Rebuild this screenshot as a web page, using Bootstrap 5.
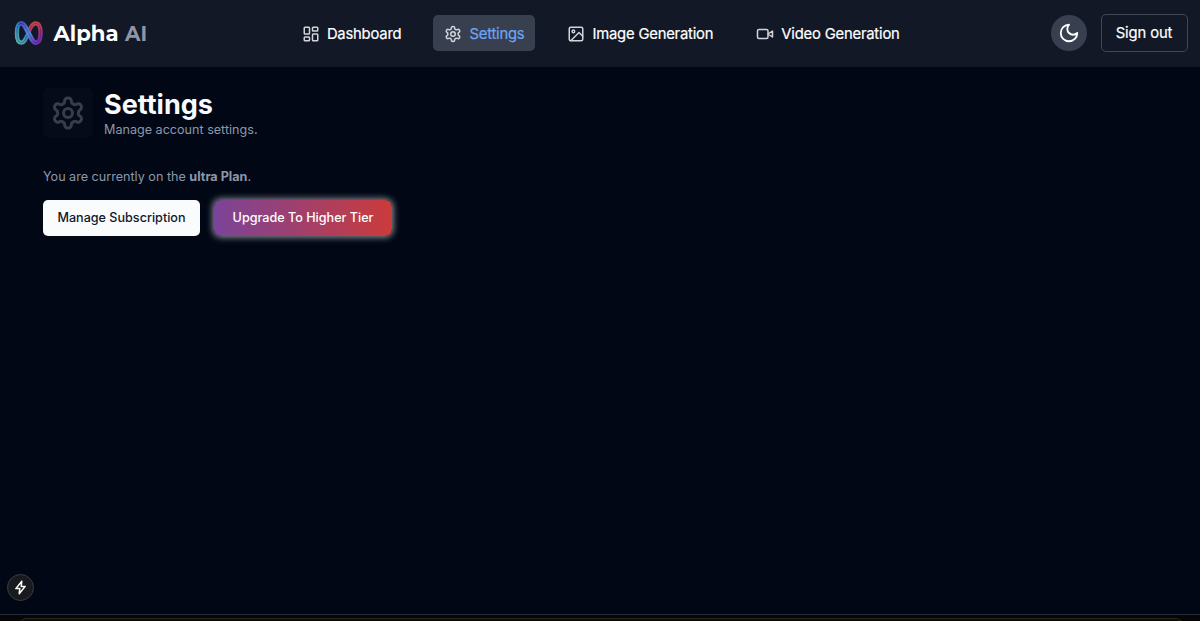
<!DOCTYPE html>
<html lang="en">
<head>
<meta charset="utf-8">
<meta name="viewport" content="width=device-width, initial-scale=1">
<title>Settings - Alpha AI</title>
<link href="https://cdn.jsdelivr.net/npm/bootstrap@5.3.0/dist/css/bootstrap.min.css" rel="stylesheet">
<style>
body{font-family:Inter,"Liberation Sans",sans-serif;background:#010715;color:#f8fafc;height:621px;overflow:hidden;font-size:12.6px}
svg{display:block;flex:none}
.ico{fill:none;stroke:currentColor;stroke-width:2;stroke-linecap:round;stroke-linejoin:round}
.topbar{height:67px;background:#121826;padding:0 12.5px 1px 14px;display:grid;grid-template-columns:1fr auto 1fr;align-items:center}
.word{font-family:Montserrat,Lato,sans-serif;font-size:21.8px;font-weight:700}
.menu{gap:21px;margin-left:0}
.menu .nav-link{color:#fff;font-size:14.8px;font-weight:400;letter-spacing:-.2px;height:36px;padding:1px 11px 0;gap:7px;border-radius:5px;line-height:20px;white-space:nowrap;-webkit-text-stroke:.2px currentColor}
.menu .nav-link svg{color:#d1d5db}
.menu .nav-link.active{background:#384050;color:#6fa5f5}
.mode{width:36px;height:36px;background:#384050;border-radius:50%;border:0;color:#fff;padding:0;margin-right:14px}
.signout{width:87px;height:38px;border:1px solid #404756;border-radius:5px;color:#fff;font-size:14.8px;font-weight:400;letter-spacing:-.1px;-webkit-text-stroke:.2px currentColor;padding:0;white-space:nowrap}
.signout:hover{border-color:#6b7280;color:#fff}
main{padding:21px 43px 0;height:547px}
.tile{width:50px;height:50px;border-radius:5px;background:#050b18;color:#373d4a;margin-right:11px}
h1{font-size:27px;font-weight:700;line-height:32px;margin:1px 0 0}
.soft{color:#8c97aa;line-height:18px;font-size:12.6px}
.plan{margin:29px 0 14px}
.actions{gap:14px}
.act{height:36px;border:0;border-radius:5px;font-size:12.6px;font-weight:500;padding:0;white-space:nowrap}
.manage{width:157px;background:#fafbfd;color:#0f172a}
.upgrade{width:178px;color:#fff;background:linear-gradient(to right,#7a4499,#cb3b3b);box-shadow:0 0 7px 1px rgba(255,255,255,.6);border-radius:7px}
.bolt{left:7px;top:574px;width:27px;height:27px;border-radius:50%;background:#191a1d;border:1px solid #3b3c3f;color:#fff}
.edge{height:7px;background:#060606;border-top:1px solid #272c39;padding:3px 18px 0 20px}
.edge div{height:6px;background:#0d0c0b;border:1px solid #292722;border-radius:9px 9px 0 0}
</style>
</head>
<body>
<header class="topbar">
  <div class="d-flex align-items-center">
    <svg width="29" height="28" viewBox="-.5 0 30 28" fill="none" stroke-linecap="round">
      <defs>
        <linearGradient id="l1" x1="1" y1="22" x2="20" y2="5" gradientUnits="userSpaceOnUse"><stop stop-color="#55b4ad"/><stop offset=".45" stop-color="#3585c5"/><stop offset="1" stop-color="#4648b8"/></linearGradient>
        <linearGradient id="l2" x1="18" y1="3" x2="23" y2="26" gradientUnits="userSpaceOnUse"><stop stop-color="#c74c3d"/><stop offset=".5" stop-color="#a32c86"/><stop offset="1" stop-color="#682cbc"/></linearGradient>
        <linearGradient id="l3" x1="7" y1="4" x2="22" y2="24" gradientUnits="userSpaceOnUse"><stop stop-color="#454bc0"/><stop offset=".5" stop-color="#568de0"/><stop offset="1" stop-color="#6b34be"/></linearGradient>
      </defs>
      <path d="M15 12C17 7 19 4 22 4c3.500 0 5 4 5 10s-1.500 10-5 10" stroke="url(#l2)" stroke-width="4.500"/>
      <path d="M13 17c-2 4-3 7-6 7-3.500 0-4.500-4-4.500-10S3.500 4 7 4" stroke="url(#l1)" stroke-width="4.500"/>
      <path d="M7 4c5 0 10 20 15 20" stroke="url(#l3)" stroke-width="5"/>
      <path d="M13 17c-2 4-3 7-6 7-3.500 0-4.500-4-4.500-10S3.500 4 7 4c5 0 10 20 15 20 3.500 0 5-4 5-10S25.500 4 22 4c-3 0-5 3-7 8" stroke="#121826" stroke-opacity=".4" stroke-width=".8"/>
    </svg>
    <svg width="105" height="34" viewBox="0 0 105 34" role="img" aria-label="Alpha AI"><text class="word" x="10.5" y="25" fill="#fff" textLength="65" lengthAdjust="spacingAndGlyphs">Alpha</text><text class="word" x="82" y="25" fill="#8f95a3" textLength="22" lengthAdjust="spacingAndGlyphs">AI</text></svg>
  </div>
  <nav class="nav menu flex-nowrap">
    <a class="nav-link d-flex align-items-center" href="#"><svg class="ico" width="18" height="18" viewBox="0 0 24 24"><rect x="3" y="3" width="7" height="9" rx="1"/><rect x="14" y="3" width="7" height="5" rx="1"/><rect x="14" y="12" width="7" height="9" rx="1"/><rect x="3" y="16" width="7" height="5" rx="1"/></svg>Dashboard</a>
    <a class="nav-link active d-flex align-items-center" href="#"><svg class="ico" width="18" height="18" viewBox="0 0 24 24"><path id="gear" d="M12.22 2h-.44a2 2 0 0 0-2 2v.18a2 2 0 0 1-1 1.73l-.43.25a2 2 0 0 1-2 0l-.15-.08a2 2 0 0 0-2.73.73l-.22.38a2 2 0 0 0 .73 2.73l.15.1a2 2 0 0 1 1 1.72v.51a2 2 0 0 1-1 1.74l-.15.09a2 2 0 0 0-.73 2.73l.22.38a2 2 0 0 0 2.73.73l.15-.08a2 2 0 0 1 2 0l.43.25a2 2 0 0 1 1 1.73V20a2 2 0 0 0 2 2h.44a2 2 0 0 0 2-2v-.18a2 2 0 0 1 1-1.73l.43-.25a2 2 0 0 1 2 0l.15.08a2 2 0 0 0 2.73-.73l.22-.39a2 2 0 0 0-.73-2.73l-.15-.08a2 2 0 0 1-1-1.74v-.5a2 2 0 0 1 1-1.74l.15-.09a2 2 0 0 0 .73-2.73l-.22-.38a2 2 0 0 0-2.73-.73l-.15.08a2 2 0 0 1-2 0l-.43-.25a2 2 0 0 1-1-1.73V4a2 2 0 0 0-2-2z"/><circle cx="12" cy="12" r="3"/></svg>Settings</a>
    <a class="nav-link d-flex align-items-center" href="#"><svg class="ico" width="18" height="18" viewBox="0 0 24 24"><rect x="3" y="3" width="18" height="18" rx="2"/><circle cx="8.5" cy="8.5" r="1.7"/><path d="m21 15-5-5L5 21"/></svg>Image Generation</a>
    <a class="nav-link d-flex align-items-center" href="#"><svg class="ico" width="18" height="18" viewBox="0 0 24 24"><path d="m22 8-6 4 6 4V8Z"/><rect x="2" y="6" width="14" height="12" rx="2"/></svg>Video Generation</a>
  </nav>
  <div class="d-flex align-items-center justify-content-end">
    <button class="mode d-flex align-items-center justify-content-center" aria-label="Theme"><svg class="ico" width="22" height="22" viewBox="0 0 24 24"><path d="M12 3a6 6 0 0 0 9 9 9 9 0 1 1-9-9Z"/></svg></button>
    <button class="btn signout">Sign out</button>
  </div>
</header>
<main>
  <div class="d-flex">
    <div class="tile d-flex align-items-center justify-content-center"><svg class="ico" width="36" height="36" viewBox="0 0 24 24"><use href="#gear"/><circle cx="12" cy="12" r="3"/></svg></div>
    <div><h1>Settings</h1><div class="soft">Manage account settings.</div></div>
  </div>
  <p class="soft plan">You are currently on the <b>ultra Plan</b>.</p>
  <div class="d-flex actions">
    <button class="btn act manage">Manage Subscription</button>
    <button class="btn act upgrade">Upgrade To Higher Tier</button>
  </div>
</main>
<footer class="edge"><div></div></footer>
<div class="bolt position-absolute d-flex align-items-center justify-content-center"><svg width="15" height="15" viewBox="0 0 15 15" fill="none" stroke="currentColor" stroke-width="1.5" stroke-linejoin="round"><path d="M8.800 1.200 2.800 8.600h4L6.200 13.800l6-7.400h-4z"/></svg></div>
<script src="https://cdn.jsdelivr.net/npm/bootstrap@5.3.0/dist/js/bootstrap.bundle.min.js"></script>
</body>
</html>
